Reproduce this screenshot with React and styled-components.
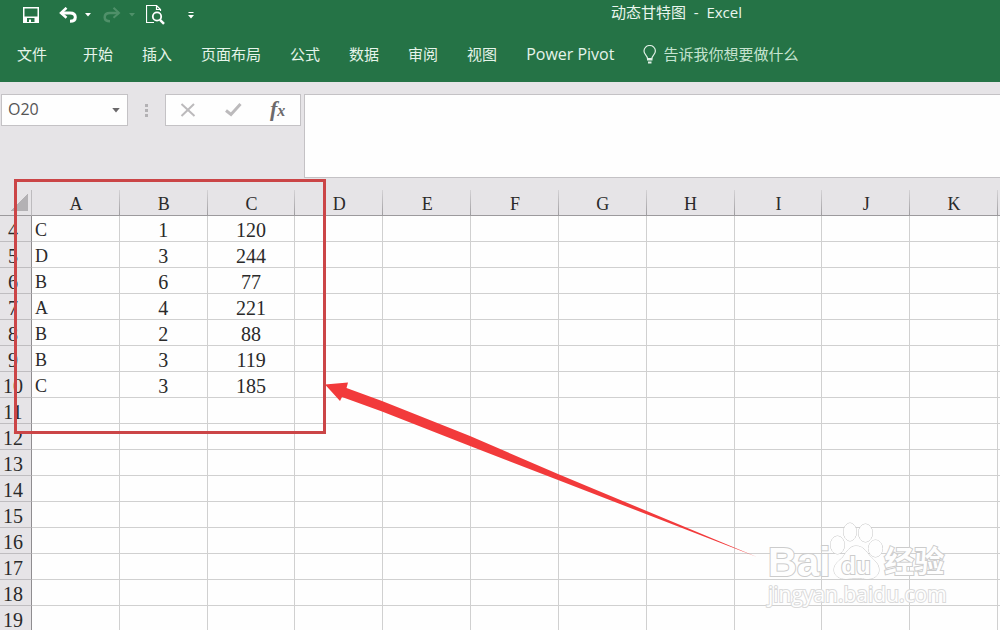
import React from 'react'
import styled, { createGlobalStyle } from 'styled-components'

const GlobalStyle = createGlobalStyle`
    * {
        box-sizing: border-box;
    }

    body {
        margin: 0;
        background: #fefefe;
        font-family: "Open Sans", "Noto Sans CJK SC", sans-serif;
    }

    button, input, textarea {
        margin: 0;
        padding: 0;
        border: 0;
        border-radius: 0;
        font: inherit;
        color: inherit;
        background: none;
        outline: none;
    }
`

const tabs = ['开始', '插入', '页面布局', '公式', '数据', '审阅', '视图'];

const columns = ['A', 'B', 'C', 'D', 'E', 'F', 'G', 'H', 'I', 'J', 'K'];

const data = {
    4: ['C', 1, 120],
    5: ['D', 3, 244],
    6: ['B', 6, 77],
    7: ['A', 4, 221],
    8: ['B', 2, 88],
    9: ['B', 3, 119],
    10: ['C', 3, 185],
};

const rows = Array.from({ length: 16 }, (_, i) => i + 4);

const SaveIcon = () => (
    <svg width="16" height="16" viewBox="0 0 16 16">
        <path fill="#fff" fillRule="evenodd" d="M0 0h16v16H0zM1.500 1.500v8h13v-8zM4 11V15h2v-2.500h2V15h3.500v-4z" />
    </svg>
)

const UndoIcon = () => (
    <svg width="18" height="16" viewBox="0 0 18 16" fill="none" stroke="currentColor" strokeWidth="3">
        <path d="M2 6h9c3.500 0 5.300 1.800 5.300 4.200 0 2.400-2 4-5.300 4" />
        <path d="M7.500 0.800L2 6l5.500 4.800" strokeWidth="2.500" />
    </svg>
)

const RedoIcon = () => (
    <svg width="18" height="16" viewBox="0 0 18 16" fill="none" stroke="currentColor" strokeWidth="2.500">
        <path d="M16 6H7C3.500 6 1.700 7.800 1.700 10.200c0 2.400 2 4 5.300 4" />
        <path d="M10.500 0.800L16 6l-5.500 4.800" strokeWidth="2" />
    </svg>
)

const PreviewIcon = () => (
    <svg width="19" height="20" viewBox="0 0 19 20" fill="none" stroke="#fff">
        <path d="M8 17.500H0.500V0.500h10l4 4V6M10.500 0.500v4h4" strokeWidth="1.200" />
        <circle cx="11" cy="11.500" r="4.200" strokeWidth="1.800" />
        <path d="M14 14.800l4 4" strokeWidth="2.500" />
    </svg>
)

const Caret = () => (
    <svg width="6" height="4" viewBox="0 0 6 4">
        <path fill="currentColor" d="M0 0h6L3 3.500z" />
    </svg>
)

const CustomizeIcon = () => (
    <svg width="6" height="7" viewBox="0 0 6 7">
        <path fill="#fff" d="M0.500 0h5v1h-5zM0 3h6L3 6.500z" />
    </svg>
)

const BulbIcon = () => (
    <svg width="14" height="19" viewBox="0 0 14 19" fill="none" stroke="#e0f0e6">
        <path d="M4.500 13.500C4.500 10.500 1 9.500 1 6a5.700 5.500 0 0 1 11.400 0c0 3.500-3.500 4.500-3.500 7.500z" strokeWidth="1.200" />
        <path d="M4 14.500h5.500M5 17.500h3.500" strokeWidth="2" />
    </svg>
)

const CancelIcon = () => (
    <svg width="16" height="14" viewBox="0 0 16 14" fill="none" stroke="#bcbabc" strokeWidth="2">
        <path d="M1.500 1l13 12M14 1L1.500 13" />
    </svg>
)

const CheckIcon = () => (
    <svg width="17" height="14" viewBox="0 0 17 14">
        <path d="M1 7.500l5 4L15.500 1" fill="none" stroke="#bcbabc" strokeWidth="3" />
    </svg>
)

const Paw = () => (
    <svg width="54" height="60" viewBox="0 0 54 60" fill="#fefefe" stroke="#c8c8c8">
        <ellipse cx="7.500" cy="23" rx="7" ry="9" />
        <ellipse cx="20" cy="10" rx="6.500" ry="9" />
        <ellipse cx="35.500" cy="11" rx="7" ry="9" />
        <ellipse cx="45.500" cy="26.500" rx="7" ry="8.500" />
        <path d="M26 24c7 0 10 5 14 10 5 5 9 8 9 14s-6 9-11 9c-5 0-7-1-11-1s-7 1-11 1c-6 0-12-3-12-9s5-9 9-13c4-6 7-11 13-11z" />
    </svg>
)

const App = () => {
    return (
        <Page>
            <GlobalStyle />
            <TitleBar>
                <QuickButton $left={23} aria-label="保存"><SaveIcon /></QuickButton>
                <QuickButton $left={20} aria-label="撤消"><UndoIcon /></QuickButton>
                <QuickButton $left={8} aria-label="撤消列表"><Caret /></QuickButton>
                <QuickButton $left={12} disabled aria-label="恢复"><RedoIcon /></QuickButton>
                <QuickButton $left={8} disabled aria-label="恢复列表"><Caret /></QuickButton>
                <QuickButton $left={11} aria-label="打印预览"><PreviewIcon /></QuickButton>
                <QuickButton $left={23} aria-label="自定义"><CustomizeIcon /></QuickButton>
                <Title>动态甘特图&nbsp; -&nbsp; Excel</Title>
            </TitleBar>
            <Ribbon>
                <Tab>文件</Tab>
                <Tabs>
                    {tabs.map((tab) => <Tab key={tab}>{tab}</Tab>)}
                    <LatinTab>Power Pivot</LatinTab>
                    <TellMe><BulbIcon />告诉我你想要做什么</TellMe>
                </Tabs>
            </Ribbon>
            <FormulaBar>
                <FormulaTools>
                    <NameBox>
                        <NameInput aria-label="名称框" defaultValue="O20" />
                        <NameButton aria-label="名称列表"><Caret /></NameButton>
                    </NameBox>
                    <Grip><i /><i /><i /></Grip>
                    <ActionBox>
                        <ActionButton aria-label="取消"><CancelIcon /></ActionButton>
                        <ActionButton aria-label="输入"><CheckIcon /></ActionButton>
                        <FxButton>f<sub>x</sub></FxButton>
                    </ActionBox>
                </FormulaTools>
                <FormulaInput aria-label="编辑栏" />
            </FormulaBar>
            <SheetArea>
                <Sheet>
                    <colgroup>
                        <RowHeadCol />
                        {columns.map((name) => <col key={name} />)}
                        <EdgeCol />
                    </colgroup>
                    <thead>
                        <tr>
                            <Corner />
                            {columns.map((name) => <ColumnHead key={name} scope="col">{name}</ColumnHead>)}
                            <EdgeHead />
                        </tr>
                    </thead>
                    <tbody>
                        {rows.map((row) => (
                            <tr key={row}>
                                <RowHead scope="row"><span>{row}</span></RowHead>
                                {columns.map((name, i) => (
                                    <Cell key={name} $letter={i === 0}>{data[row]?.[i]}</Cell>
                                ))}
                                <Cell />
                            </tr>
                        ))}
                    </tbody>
                </Sheet>
                <Highlight />
                <Arrow width="436" height="176" viewBox="0 0 436 176">
                    <path fill="#f23a3b" d="M0 2.500L23 0.500L21.500 6L57 19L145 54L233 92L432 175L233 98L145 64L57 29.500L17 15L15 19z" />
                </Arrow>
                <Watermark>
                    <Brand>
                        <span>Bai</span>
                        <PawBox><Paw /><b>du</b></PawBox>
                        <BrandCn>经验</BrandCn>
                    </Brand>
                    <Site>jingyan.baidu.com</Site>
                </Watermark>
            </SheetArea>
        </Page>
    )
}

const Page = styled.div`
    display: flex;
    flex-direction: column;
    height: 100vh;
    overflow: hidden;
    background: #e6e4e7;
`

const TitleBar = styled.header`
    display: flex;
    align-items: center;
    height: 30px;
    flex-shrink: 0;
    color: #fff;
    background: #257346;
`

const QuickButton = styled.button`
    display: flex;
    margin-left: ${(props) => props.$left}px;

    &:disabled {
        color: #4f9069;
    }
`

const Title = styled.div`
    flex: 1;
    padding: 0 258px 6px 0;
    font-size: 15px;
    line-height: 20px;
    text-align: right;
    white-space: nowrap;
    color: #eaf6ee;
`

const Ribbon = styled.nav`
    display: flex;
    align-items: center;
    gap: 36px;
    height: 52px;
    padding: 0 17px 4px;
    flex-shrink: 0;
    font-size: 15px;
    line-height: 20px;
    white-space: nowrap;
    color: #e6f4ea;
    background: #257346;
`

const Tab = styled.button``

const LatinTab = styled(Tab)`
    font-size: 16px;
`

const Tabs = styled.div`
    display: flex;
    align-items: center;
    gap: 29px;
`

const TellMe = styled(Tab)`
    display: flex;
    align-items: center;
    gap: 6px;
    color: #c5e3d0;
`

const FormulaBar = styled.div`
    display: flex;
    height: 96px;
    padding-top: 12px;
    flex-shrink: 0;
`

const FormulaTools = styled.div`
    display: flex;
    align-items: flex-start;
    width: 304px;
    padding-left: 1px;
    flex-shrink: 0;
`

const NameBox = styled.div`
    display: flex;
    width: 127px;
    height: 32px;
    border: 1px solid #c4c2c5;
    background: #fefefe;
`

const NameInput = styled.input`
    flex: 1;
    min-width: 0;
    padding: 0 0 2px 6px;
    font-size: 16px;
    color: #555;
`

const NameButton = styled.button`
    display: flex;
    align-items: center;
    justify-content: center;
    width: 22px;
    color: #6a686a;

    svg {
        width: 8px;
        height: 5px;
    }
`

const Grip = styled.div`
    display: flex;
    flex-direction: column;
    align-items: center;
    justify-content: center;
    gap: 2px;
    width: 37px;
    height: 32px;

    i {
        width: 3px;
        height: 3px;
        background: #b3b1b4;
    }
`

const ActionBox = styled.div`
    display: flex;
    width: 136px;
    height: 32px;
    border: 1px solid #c4c2c5;
    background: #fefefe;
`

const ActionButton = styled.button`
    display: flex;
    flex: 1;
    align-items: center;
    justify-content: center;
`

const FxButton = styled(ActionButton)`
    padding-bottom: 2px;
    font-family: "Liberation Serif", serif;
    font-size: 22px;
    font-style: italic;
    font-weight: 700;
    line-height: 24px;
    color: #6c6a6c;

    sub {
        padding-top: 4px;
        font-size: 16px;
        line-height: 16px;
    }
`

const FormulaInput = styled.textarea`
    flex: 1;
    min-width: 0;
    resize: none;
    border: 1px solid #c4c2c5;
    border-right: 0;
    background: #fefefe;
`

const SheetArea = styled.main`
    position: relative;
    flex: 1;
    min-height: 0;
    padding-top: 12px;
`

const Sheet = styled.table`
    width: 100%;
    table-layout: fixed;
    border-collapse: separate;
    border-spacing: 0;
    font-family: "Liberation Serif", "Noto Sans CJK SC", serif;
    font-size: 20px;
    line-height: 22px;
    color: #2a2a2a;

    th, td {
        height: 26px;
        padding: 3px 0 0;
        font-weight: 400;
    }
`

const RowHeadCol = styled.col`
    width: 32px;
`

const EdgeCol = styled.col`
    width: 2px;
`

const Corner = styled.td`
    border-right: 1px solid #bdbbbe;
    border-bottom: 1px solid #9c9a9d;
    background: linear-gradient(135deg, transparent 50%, #b3b1b4 50%) 11px 4px / 17px 17px no-repeat;
`

const ColumnHead = styled.th`
    border-bottom: 1px solid #9c9a9d;
    font-size: 18px;
    background: linear-gradient(#d4d2d5, #a09ea1) right / 1px 100% no-repeat;
`

const EdgeHead = styled.td`
    border-bottom: 1px solid #9c9a9d;
`

const RowHead = styled.th`
    border-right: 1px solid #8f8d90;
    border-bottom: 1px solid #bfbdc0;
    background: #e6e4e7;

    span {
        display: block;
        width: 26px;
    }
`

const Cell = styled.td`
    border-right: 1px solid #d0d0d0;
    border-bottom: 1px solid #d0d0d0;
    font-size: ${(props) => (props.$letter ? '18px' : '20px')};
    text-align: ${(props) => (props.$letter ? 'left' : 'center')};
    text-indent: ${(props) => (props.$letter ? '3px' : '0')};
    background: #fefefe;

    &:last-child {
        border-right: 0;
    }
`

const Highlight = styled.div`
    position: absolute;
    top: 1px;
    left: 14px;
    width: 312px;
    height: 255px;
    border: 3px solid #cb4547;
`

const Arrow = styled.svg`
    position: absolute;
    top: 204px;
    left: 325px;
`

const Watermark = styled.div`
    position: absolute;
    top: 344px;
    left: 768px;
    font-family: "Liberation Sans", "Noto Sans CJK SC", sans-serif;
    font-weight: 700;
    color: #fefefe;
    -webkit-text-stroke: 2px #cccccc;
    paint-order: stroke fill;
    white-space: nowrap;
`

const Brand = styled.div`
    display: flex;
    align-items: flex-end;
    height: 60px;
    font-size: 40px;
    line-height: 40px;
`

const PawBox = styled.div`
    position: relative;
    width: 54px;
    height: 60px;

    b {
        position: absolute;
        left: 11px;
        bottom: 2px;
        font-size: 24px;
        line-height: 28px;
    }
`

const BrandCn = styled.span`
    font-size: 30px;
`

const Site = styled.div`
    font-family: "Open Sans", sans-serif;
    font-size: 21px;
    font-weight: 400;
    line-height: 24px;
    -webkit-text-stroke: 2px #dadada;
`

export default App
